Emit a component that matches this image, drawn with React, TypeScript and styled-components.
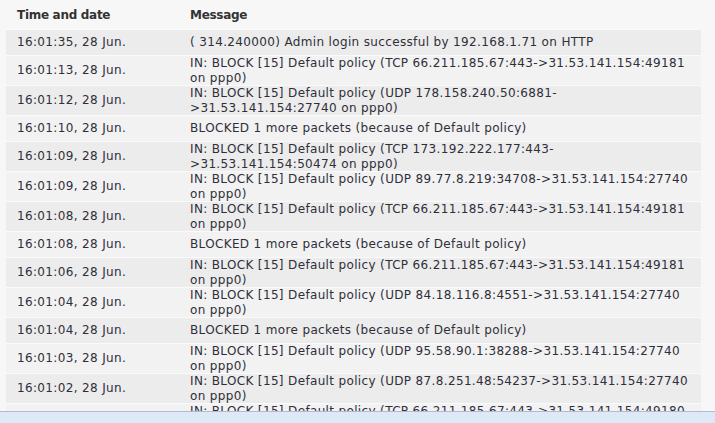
import React from 'react';
import styled, { createGlobalStyle } from 'styled-components';

interface LogEntry {
    id: string;
    time: string;
    message: string;
}

const entries: LogEntry[] = [
    { id: '1', time: '16:01:35, 28 Jun.', message: '( 314.240000) Admin login successful by 192.168.1.71 on HTTP' },
    { id: '2', time: '16:01:13, 28 Jun.', message: 'IN: BLOCK [15] Default policy (TCP 66.211.185.67:443->31.53.141.154:49181 on ppp0)' },
    { id: '3', time: '16:01:12, 28 Jun.', message: 'IN: BLOCK [15] Default policy (UDP 178.158.240.50:6881->31.53.141.154:27740 on ppp0)' },
    { id: '4', time: '16:01:10, 28 Jun.', message: 'BLOCKED 1 more packets (because of Default policy)' },
    { id: '5', time: '16:01:09, 28 Jun.', message: 'IN: BLOCK [15] Default policy (TCP 173.192.222.177:443->31.53.141.154:50474 on ppp0)' },
    { id: '6', time: '16:01:09, 28 Jun.', message: 'IN: BLOCK [15] Default policy (UDP 89.77.8.219:34708->31.53.141.154:27740 on ppp0)' },
    { id: '7', time: '16:01:08, 28 Jun.', message: 'IN: BLOCK [15] Default policy (TCP 66.211.185.67:443->31.53.141.154:49181 on ppp0)' },
    { id: '8', time: '16:01:08, 28 Jun.', message: 'BLOCKED 1 more packets (because of Default policy)' },
    { id: '9', time: '16:01:06, 28 Jun.', message: 'IN: BLOCK [15] Default policy (TCP 66.211.185.67:443->31.53.141.154:49181 on ppp0)' },
    { id: '10', time: '16:01:04, 28 Jun.', message: 'IN: BLOCK [15] Default policy (UDP 84.18.116.8:4551->31.53.141.154:27740 on ppp0)' },
    { id: '11', time: '16:01:04, 28 Jun.', message: 'BLOCKED 1 more packets (because of Default policy)' },
    { id: '12', time: '16:01:03, 28 Jun.', message: 'IN: BLOCK [15] Default policy (UDP 95.58.90.1:38288->31.53.141.154:27740 on ppp0)' },
    { id: '13', time: '16:01:02, 28 Jun.', message: 'IN: BLOCK [15] Default policy (UDP 87.8.251.48:54237->31.53.141.154:27740 on ppp0)' },
    { id: '14', time: '16:01:01, 28 Jun.', message: 'IN: BLOCK [15] Default policy (TCP 66.211.185.67:443->31.53.141.154:49180 on ppp0)' },
];

const GlobalStyle = createGlobalStyle`
    html, body {
        margin: 0;
        padding: 0;
        height: 100%;
        overflow: hidden;
        background: #f7f7f7;
    }
    body {
        font-family: Verdana, "DejaVu Sans", sans-serif;
        font-size: 12px;
        color: #333;
    }
`;

const Page = styled.div`
    height: 100vh;
    display: flex;
    flex-direction: column;
`;

const LogArea = styled.div`
    flex: 1;
    min-height: 0;
    overflow: hidden;
    padding: 0 14px 0 6px;
`;

const StatusBar = styled.div`
    flex: 0 0 11px;
    background: #dde9f7;
    border-top: 1px solid #aebdd1;
`;

const LogTable = styled.table`
    width: 100%;
    border-collapse: separate;
    border-spacing: 0;
    table-layout: fixed;
`;

const HeaderCell = styled.th<{ width?: string }>`
    height: 30px;
    padding: 0 11px;
    text-align: left;
    vertical-align: middle;
    font-weight: bold;
    font-size: 12px;
    letter-spacing: -0.3px;
    color: #333;
    border-bottom: 1px solid #fafafa;
    box-sizing: border-box;
    ${props => props.width && `width: ${props.width};`}
`;

const Row = styled.tr<{ odd?: boolean }>`
    background: ${props => (props.odd ? '#ececec' : '#f2f2f2')};
`;

const Cell = styled.td`
    height: 26px;
    box-sizing: border-box;
    padding: 0 11px;
    vertical-align: middle;
    line-height: 14.5px;
    letter-spacing: 0.35px;
    color: #2f2f3a;
    border-bottom: 1px solid #fafafa;
    word-wrap: break-word;
`;

export default function App() {
    return (
        <Page>
            <GlobalStyle />
            <LogArea>
                <LogTable>
                    <thead>
                        <tr>
                            <HeaderCell width="173px">Time and date</HeaderCell>
                            <HeaderCell>Message</HeaderCell>
                        </tr>
                    </thead>
                    <tbody>
                        {entries.map((entry, i) => (
                            <Row key={entry.id} odd={i % 2 === 0}>
                                <Cell>{entry.time}</Cell>
                                <Cell>{entry.message}</Cell>
                            </Row>
                        ))}
                    </tbody>
                </LogTable>
            </LogArea>
            <StatusBar />
        </Page>
    );
}
